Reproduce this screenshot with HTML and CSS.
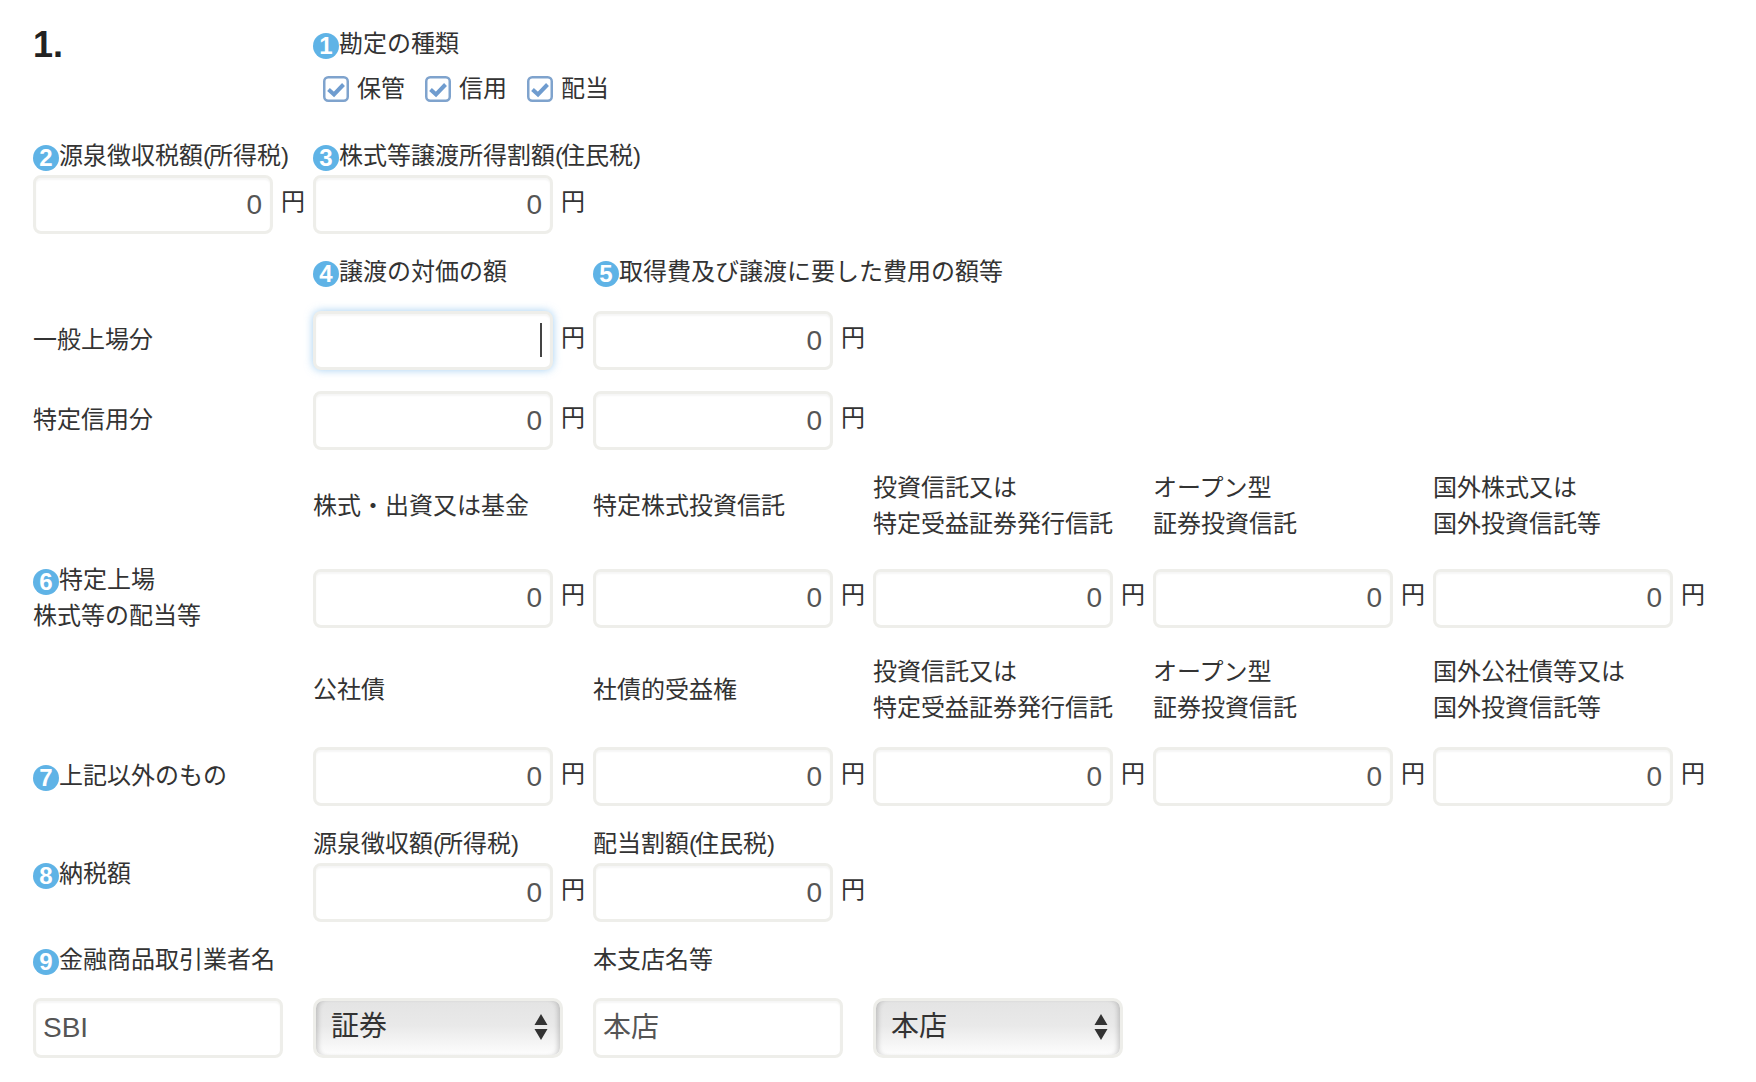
FILE: index.html
```html
<!DOCTYPE html>
<html lang="ja">
<head>
<meta charset="utf-8">
<title>1.</title>
<link rel="stylesheet" href="styles.css">
</head>
<body>
<form class="sheet">
  <div class="row r1">
    <div class="section-no">1.</div>
    <div class="label"><span class="num">1</span>勘定の種類</div>
  </div>
  <div class="row r2">
    <div class="skip"></div>
    <div class="checks">
      <label class="check"><svg class="box" width="26" height="26" viewBox="0 0 26 26"><rect x="1.250" y="1.250" width="23.500" height="23.500" rx="4" fill="#fff" stroke="#7fa3cd" stroke-width="2.500"/><path d="M5.500 13.500l5.500 5 9.500-10" fill="none" stroke="#6f9ccf" stroke-width="4"/></svg>保管</label>
      <label class="check"><svg class="box" width="26" height="26" viewBox="0 0 26 26"><rect x="1.250" y="1.250" width="23.500" height="23.500" rx="4" fill="#fff" stroke="#7fa3cd" stroke-width="2.500"/><path d="M5.500 13.500l5.500 5 9.500-10" fill="none" stroke="#6f9ccf" stroke-width="4"/></svg>信用</label>
      <label class="check"><svg class="box" width="26" height="26" viewBox="0 0 26 26"><rect x="1.250" y="1.250" width="23.500" height="23.500" rx="4" fill="#fff" stroke="#7fa3cd" stroke-width="2.500"/><path d="M5.500 13.500l5.500 5 9.500-10" fill="none" stroke="#6f9ccf" stroke-width="4"/></svg>配当</label>
    </div>
  </div>
  <div class="row r3">
    <div class="label"><span class="num">2</span>源泉徴収税額<span class="paren">(</span>所得税<span class="paren">)</span></div>
    <div class="label"><span class="num">3</span>株式等譲渡所得割額<span class="paren">(</span>住民税<span class="paren">)</span></div>
  </div>
  <div class="row r4">
    <div class="field"><input class="money" value="0"><span class="yen">円</span></div>
    <div class="field"><input class="money" value="0"><span class="yen">円</span></div>
  </div>
  <div class="row r5">
    <div class="skip"></div>
    <div class="label"><span class="num">4</span>譲渡の対価の額</div>
    <div class="label"><span class="num">5</span>取得費及び譲渡に要した費用の額等</div>
  </div>
  <div class="row r6">
    <div class="label">一般上場分</div>
    <div class="field"><input class="money focused" value=""><span class="caret"></span><span class="yen">円</span></div>
    <div class="field"><input class="money" value="0"><span class="yen">円</span></div>
  </div>
  <div class="row r7">
    <div class="label">特定信用分</div>
    <div class="field"><input class="money" value="0"><span class="yen">円</span></div>
    <div class="field"><input class="money" value="0"><span class="yen">円</span></div>
  </div>
  <div class="row r8">
    <div class="skip"></div>
    <div class="label">株式・出資又は基金</div>
    <div class="label">特定株式投資信託</div>
    <div class="label">投資信託又は<br>特定受益証券発行信託</div>
    <div class="label">オープン型<br>証券投資信託</div>
    <div class="label">国外株式又は<br>国外投資信託等</div>
  </div>
  <div class="row r9">
    <div class="label"><span class="num">6</span>特定上場<br>株式等の配当等</div>
    <div class="field"><input class="money" value="0"><span class="yen">円</span></div>
    <div class="field"><input class="money" value="0"><span class="yen">円</span></div>
    <div class="field"><input class="money" value="0"><span class="yen">円</span></div>
    <div class="field"><input class="money" value="0"><span class="yen">円</span></div>
    <div class="field"><input class="money" value="0"><span class="yen">円</span></div>
  </div>
  <div class="row r10">
    <div class="skip"></div>
    <div class="label">公社債</div>
    <div class="label">社債的受益権</div>
    <div class="label">投資信託又は<br>特定受益証券発行信託</div>
    <div class="label">オープン型<br>証券投資信託</div>
    <div class="label">国外公社債等又は<br>国外投資信託等</div>
  </div>
  <div class="row r11">
    <div class="label"><span class="num">7</span>上記以外のもの</div>
    <div class="field"><input class="money" value="0"><span class="yen">円</span></div>
    <div class="field"><input class="money" value="0"><span class="yen">円</span></div>
    <div class="field"><input class="money" value="0"><span class="yen">円</span></div>
    <div class="field"><input class="money" value="0"><span class="yen">円</span></div>
    <div class="field"><input class="money" value="0"><span class="yen">円</span></div>
  </div>
  <div class="row r12">
    <div class="label tall"><span class="num">8</span>納税額</div>
    <div class="label">源泉徴収額<span class="paren">(</span>所得税<span class="paren">)</span></div>
    <div class="label">配当割額<span class="paren">(</span>住民税<span class="paren">)</span></div>
    <div class="field col2"><input class="money" value="0"><span class="yen">円</span></div>
    <div class="field"><input class="money" value="0"><span class="yen">円</span></div>
  </div>
  <div class="row r13">
    <div class="label"><span class="num">9</span>金融商品取引業者名</div>
    <div class="skip"></div>
    <div class="label">本支店名等</div>
  </div>
  <div class="row r14">
    <input class="name" value="SBI">
    <div class="pick"><select class="sel"><option>証券</option></select><svg class="updown" width="14" height="26" viewBox="0 0 14 26"><path d="M7 0l6.500 11H.5zM.5 15h13L7 26z" fill="#333"/></svg></div>
    <input class="name name-jp" value="本店">
    <div class="pick"><select class="sel"><option>本店</option></select><svg class="updown" width="14" height="26" viewBox="0 0 14 26"><path d="M7 0l6.500 11H.5zM.5 15h13L7 26z" fill="#333"/></svg></div>
  </div>
</form>
</body>
</html>
```
FILE: styles.css
```css
* { box-sizing: border-box; }
html, body { margin: 0; padding: 0; background: #fff; }
body {
  font-family: "Liberation Sans", "Noto Sans CJK JP", sans-serif;
  font-size: 24px;
  line-height: 36px;
  color: #333;
  overflow: hidden;
}
.sheet { padding: 25px 0 0 33px; }
.row { display: grid; grid-template-columns: repeat(6, 280px); align-items: center; }
.r2 { margin-top: 8px; }
.r3 { margin-top: 31px; }
.r4 { margin-top: 1px; }
.r5 { margin-top: 20px; }
.r6, .r7, .r11 { margin-top: 21px; }
.r6 .label, .r7 .label, .r11 .label { margin-bottom: 2px; }
.r8 { margin-top: 20px; }
.r9 { margin-top: 20px; }
.r10 { margin-top: 20px; }
.r12 { margin-top: 20px; row-gap: 1px; }
.r13 { margin-top: 20px; }
.r14 { margin-top: 20px; }

.section-no { font-size: 36px; font-weight: 700; color: #222; line-height: 36px; padding-top: 2px; }
.label { white-space: nowrap; }
.tall { grid-row: span 2; }
.col2 { grid-column: 2; }
.paren { letter-spacing: -2px; }
.num {
  display: inline-block;
  width: 26px;
  height: 26px;
  margin-top: 7px;
  border-radius: 50%;
  background: #5fb3e6;
  color: #fff;
  font-size: 24px;
  font-weight: 700;
  line-height: 26px;
  text-align: center;
  vertical-align: top;
}
.checks { display: flex; gap: 20px; margin-left: 10px; width: max-content; }
.check { display: flex; align-items: center; gap: 8px; white-space: nowrap; }
.box { flex: none; }
.field { display: flex; align-items: center; gap: 8px; position: relative; }
.money, .name {
  height: 59px;
  border: 3px solid #eeeeea;
  border-radius: 8px;
  background: #fff;
  box-shadow: inset 0 2px 2px rgba(0, 0, 0, .04);
  font: 28px "Liberation Sans", "Noto Sans CJK JP", sans-serif;
  color: #555;
  outline: none;
}
.money { width: 240px; padding: 0 8px; text-align: right; }
.name { width: 250px; height: 60px; padding: 0 7px; }
.name-jp { padding-bottom: 6px; }
.focused { box-shadow: inset 0 2px 2px rgba(0, 0, 0, .04), 0 0 9px rgba(102, 175, 233, .6); }
.caret { position: absolute; left: 227px; top: 12px; width: 2px; height: 34px; background: #444; }
.yen { margin-bottom: 6px; }
.pick { position: relative; width: 250px; height: 60px; }
.sel {
  appearance: none;
  -webkit-appearance: none;
  display: block;
  width: 100%;
  height: 100%;
  padding: 0 0 4px 15px;
  border: 3px solid #eeeeea;
  border-radius: 10px;
  background: linear-gradient(#e4e4e4, #e9e9e9 45%, #fdfdfd);
  box-shadow: inset 5px 0 5px -3px rgba(0, 0, 0, .18), inset -5px 0 5px -3px rgba(0, 0, 0, .18);
  font: 28px "Liberation Sans", "Noto Sans CJK JP", sans-serif;
  color: #333;
  outline: none;
}
.updown { position: absolute; right: 15px; top: 16px; }
```
